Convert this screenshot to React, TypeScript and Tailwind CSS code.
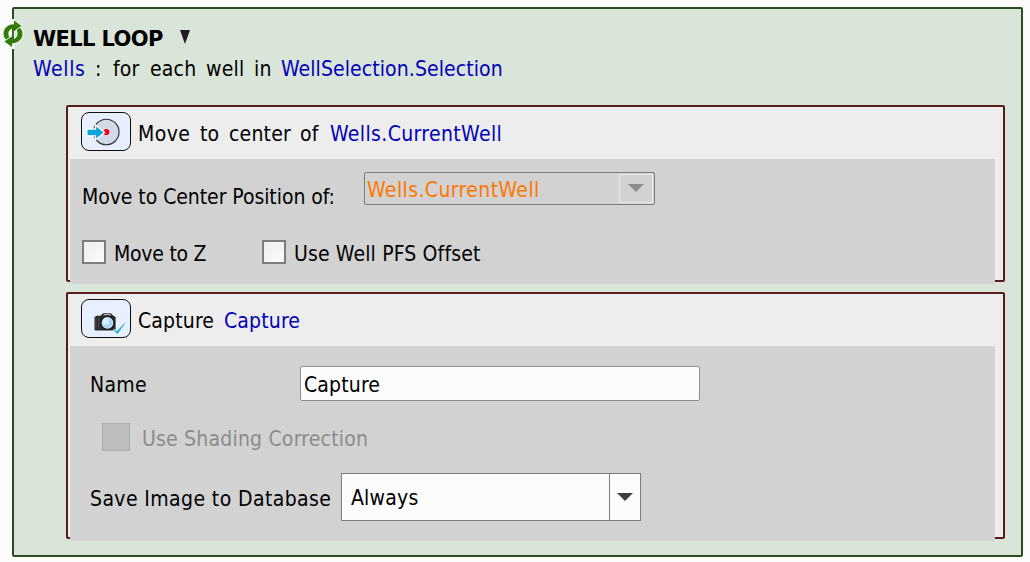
import type { ReactNode } from "react";

function Text({ className = "", children }: { className?: string; children: ReactNode }) {
  return <span className={`block h-6 whitespace-pre leading-6 ${className}`}>{children}</span>;
}

function LoopIcon() {
  const half =
    "M13 1.500L20.500 7L13 12.300V9.300C8.500 9.500 6 13.500 8.300 18.500L5 20.800C-0.500 14.500 3.500 5.500 13 5.200Z";
  return (
    <svg viewBox="0 0 24 30" className="absolute -left-[13px] top-[10px] h-[30px] w-6">
      <path d="M12 0V30" stroke="#fcfcfc" strokeWidth="3" />
      <g fill="#2f7d05" stroke="#f4f8f2" strokeWidth="1.600" paintOrder="stroke" strokeLinejoin="round">
        <path d={half} />
        <path d={half} transform="rotate(180 12 14.800)" />
      </g>
      <path d="M12 9V20.500" stroke="#2c5c14" strokeWidth="1.800" />
    </svg>
  );
}

function MoveIcon() {
  return (
    <svg viewBox="0 0 50 39" className="h-[39px] w-[50px]">
      <circle cx="25.300" cy="20" r="13.300" fill="#d2dae5" stroke="#303236" strokeWidth="1.200" />
      <circle cx="25.300" cy="20" r="3.200" fill="#f0001c" />
      <path d="M5 17H14V13L23.500 20.500L14 28V24H5Z" fill="#08a4dc" stroke="#fff" strokeWidth="1.400" />
    </svg>
  );
}

function CameraIcon() {
  return (
    <svg viewBox="0 0 50 39" className="h-[39px] w-[50px]">
      <path d="M13 18L16 16.500L19 17L22 14H30L33 17L35 18V31L32 32H14L13 31Z" fill="#292929" />
      <path d="M22.500 16.200Q26 14.200 30 16.200" fill="none" stroke="#b8b8b8" strokeWidth="1.200" />
      <path d="M14.500 19V30M17.500 18.500V30.500" stroke="#555" strokeWidth="1" />
      <circle cx="26.500" cy="24" r="6.800" fill="#d9efff" stroke="#161616" strokeWidth="1.300" />
      <circle cx="26.500" cy="24" r="5.300" fill="#a7d6f7" />
      <circle cx="25" cy="22.500" r="3.200" fill="#d8efff" />
      <path d="M33 31L36.500 34.500L44 25.500" fill="none" stroke="#e8f0ff" strokeWidth="2.500" />
      <path d="M32.500 30.500L36.500 33L44.500 24.500L36.800 35.500Z" fill="#08a4dc" stroke="#08a4dc" strokeWidth=".5" />
    </svg>
  );
}

function IconButton({ children }: { children: ReactNode }) {
  return (
    <button className="flex h-[39px] w-[50px] shrink-0 items-center justify-center overflow-hidden rounded-[8px] border border-[#101010] bg-[#e8f0ff]">
      {children}
    </button>
  );
}

function Card({ header, children, className }: { header: ReactNode; children: ReactNode; className: string }) {
  return (
    <section className={`rounded-[2px] border-2 border-[#581b1d] bg-[#ededed] pl-[2px] pr-2 ${className}`}>
      <div className="flex pl-[11px] pt-[5px]">{header}</div>
      {children}
    </section>
  );
}

export default function App() {
  return (
    <main className="h-[562px] w-[1030px] bg-[#fcfcfc] pl-3 pt-[7px] font-['DejaVu_Sans_Condensed','DejaVu_Sans',sans-serif] text-[21px] text-black [font-stretch:condensed]">
      <div className="relative h-[550px] w-[1011px] rounded-[2px] border-2 border-[#2c4c20] bg-[#dae5d9]">
        <LoopIcon />
        <header className="pl-[19px] pt-[18px]">
          <div className="flex h-[30px]">
            <Text className="w-[147px] font-['DejaVu_Sans',sans-serif] font-bold tracking-[-0.6px] [font-stretch:normal]">WELL LOOP</Text>
            <svg viewBox="0 0 10 14" className="mt-[3px] h-[14px] w-[10px]">
              <path d="M0 0H10L5 14Z" fill="#1c1c1c" />
            </svg>
          </div>
          <div className="flex">
            <Text className="w-[62px] tracking-[0.6px] text-[#0000b8]">Wells</Text>
            <Text className="w-[18px]">:</Text>
            <Text className="w-[37px] tracking-[0.2px]">for</Text>
            <Text className="w-[56px] tracking-[0.2px]">each</Text>
            <Text className="w-[48px] tracking-[0.2px]">well</Text>
            <Text className="w-[27px] tracking-[0.3px]">in</Text>
            <Text className="tracking-[0.09px] text-[#0000b8]">WellSelection.Selection</Text>
          </div>
        </header>

        <div className="ml-[52px] mt-6 flex flex-col gap-[10px]">
          <Card
            className="h-[177px] w-[939px]"
            header={
              <>
                <IconButton><MoveIcon /></IconButton>
                <div className="flex pl-[7px] pt-[10px]">
                  <Text className="w-[62px] tracking-[0.4px]">Move</Text>
                  <Text className="w-[29px]">to</Text>
                  <Text className="w-[71px] tracking-[0.2px]">center</Text>
                  <Text className="w-[30px] tracking-[0.3px]">of</Text>
                  <Text className="tracking-[0.37px] text-[#0000b8]">Wells.CurrentWell</Text>
                </div>
              </>
            }
          >
            <div className="mt-[8px] h-[125px] bg-[#d2d2d2] pt-[13px]">
              <div className="flex h-[37px] pl-3">
                <Text className="mt-[13px] w-[282px] tracking-[-0.06px]">Move to Center Position of:</Text>
                <div className="flex h-[33px] w-[291px] justify-between rounded-[2px] border border-[#7c7c7c] p-px">
                  <Text className="pl-[1px] pt-[4px] tracking-[0.4px] text-[#ff7800]">Wells.CurrentWell</Text>
                  <div className="flex w-[34px] justify-center rounded-[1px] border border-[#e8e8e8] pt-[9px]">
                    <svg viewBox="0 0 16 8" className="h-2 w-4"><path d="M0 0H16L8 8Z" fill="#8c8c8c" /></svg>
                  </div>
                </div>
              </div>
              <div className="mt-[31px] flex pl-3">
                <span className="h-6 w-6 border-2 border-[#7d7d7d] bg-gradient-to-br from-[#ededed] to-[#fcfcfc]" />
                <Text className="w-[156px] pl-2 pt-[2px] tracking-[-0.25px]">Move to Z</Text>
                <span className="h-6 w-6 border-2 border-[#7d7d7d] bg-gradient-to-br from-[#ededed] to-[#fcfcfc]" />
                <Text className="pl-2 pt-[2px] tracking-[0.14px]">Use Well PFS Offset</Text>
              </div>
            </div>
          </Card>

          <Card
            className="h-[247px] w-[939px]"
            header={
              <>
                <IconButton><CameraIcon /></IconButton>
                <div className="flex pl-[7px] pt-[10px]">
                  <Text className="w-[86px] tracking-[0.15px]">Capture</Text>
                  <Text className="tracking-[0.15px] text-[#0000b8]">Capture</Text>
                </div>
              </>
            }
          >
            <div className="mt-[8px] h-[195px] bg-[#d2d2d2] pl-5 pt-5">
              <div className="flex">
                <Text className="w-[210px] pt-[7px] tracking-[0.3px]">Name</Text>
                <div className="h-[35px] w-[400px] rounded-[2px] border border-[#8f8f8f] bg-[#fcfcfc] pl-[3px] pt-[6px]">
                  <Text className="tracking-[0.15px]">Capture</Text>
                </div>
              </div>
              <div className="flex pl-3 pt-[22px]">
                <span className="h-7 w-7 border border-[#acacac] bg-[#bdbdbd]" />
                <Text className="pl-3 pt-[4px] tracking-[0.2px] text-[#8c8c8c]">Use Shading Correction</Text>
              </div>
              <div className="flex pt-[22px]">
                <Text className="w-[251px] pt-[14px] tracking-[0.39px]">Save Image to Database</Text>
                <div className="flex h-[48px] w-[300px] border border-[#7c7c7c] bg-[#fcfcfc]">
                  <Text className="w-[267px] pl-[9px] pt-[12px] tracking-[0.2px]">Always</Text>
                  <div className="flex w-[31px] justify-center border-l border-[#7c7c7c] pt-[19px]">
                    <svg viewBox="0 0 16 8" className="h-2 w-4"><path d="M0 0H16L8 8Z" fill="#404040" /></svg>
                  </div>
                </div>
              </div>
            </div>
          </Card>
        </div>
      </div>
    </main>
  );
}
